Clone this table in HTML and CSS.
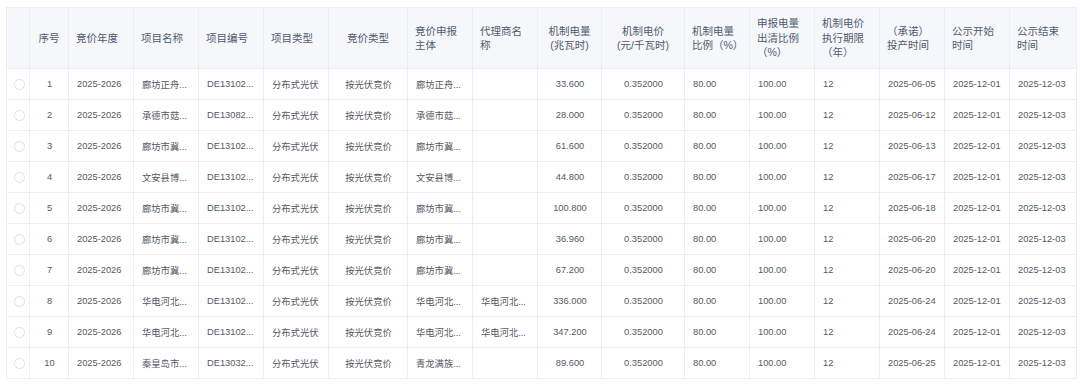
FILE: index.html
```html
<!DOCTYPE html>
<html>
    <head>
        <meta charset="utf-8">
        <link rel="stylesheet" href="styles.css">
    </head>
    <body>

    <div class="wrap">
        <table class="grid">
            <colgroup>
                <col style="width: 23px">
                <col style="width: 39px">
                <col style="width: 65px">
                <col style="width: 65px">
                <col style="width: 65px">
                <col style="width: 65px">
                <col style="width: 79px">
                <col style="width: 65px">
                <col style="width: 65px">
                <col style="width: 64px">
                <col style="width: 83px">
                <col style="width: 65px">
                <col style="width: 65px">
                <col style="width: 65px">
                <col style="width: 65px">
                <col style="width: 65px">
                <col style="width: 67px">
            </colgroup>
            <thead>
                <tr>
                    <th></th>
                    <th class="c">序号</th>
                    <th>竞价年度</th>
                    <th>项目名称</th>
                    <th>项目编号</th>
                    <th>项目类型</th>
                    <th class="c">竞价类型</th>
                    <th>竞价申报<br>主体</th>
                    <th>代理商名<br>称</th>
                    <th class="c">机制电量<br>(兆瓦时)</th>
                    <th class="c">机制电价<br>(元/千瓦时)</th>
                    <th>机制电量<br>比例（%）</th>
                    <th>申报电量<br>出清比例<br>（%）</th>
                    <th>机制电价<br>执行期限<br>（年）</th>
                    <th>（承诺）<br>投产时间</th>
                    <th>公示开始<br>时间</th>
                    <th>公示结束<br>时间</th>
                </tr>
            </thead>
            <tbody id="rows"></tbody>
        </table>
    </div>

    <script>
        const rows = [
            ['1', '廊坊正舟...', 'DE13102...', '廊坊正舟...', '', '33.600', '2025-06-05'],
            ['2', '承德市菇...', 'DE13082...', '承德市菇...', '', '28.000', '2025-06-12'],
            ['3', '廊坊市冀...', 'DE13102...', '廊坊市冀...', '', '61.600', '2025-06-13'],
            ['4', '文安县博...', 'DE13102...', '文安县博...', '', '44.800', '2025-06-17'],
            ['5', '廊坊市冀...', 'DE13102...', '廊坊市冀...', '', '100.800', '2025-06-18'],
            ['6', '廊坊市冀...', 'DE13102...', '廊坊市冀...', '', '36.960', '2025-06-20'],
            ['7', '廊坊市冀...', 'DE13102...', '廊坊市冀...', '', '67.200', '2025-06-20'],
            ['8', '华电河北...', 'DE13102...', '华电河北...', '华电河北...', '336.000', '2025-06-24'],
            ['9', '华电河北...', 'DE13102...', '华电河北...', '华电河北...', '347.200', '2025-06-24'],
            ['10', '秦皇岛市...', 'DE13032...', '青龙满族...', '', '89.600', '2025-06-25']
        ]

        const body = document.getElementById('rows')
        rows.forEach(r => {
            const tr = document.createElement('tr')
            tr.innerHTML =
                '<td><span class="radio"></span></td>'
                + '<td class="c">' + r[0] + '</td>'
                + '<td>2025-2026</td>'
                + '<td>' + r[1] + '</td>'
                + '<td>' + r[2] + '</td>'
                + '<td>分布式光伏</td>'
                + '<td class="c">按光伏竞价</td>'
                + '<td>' + r[3] + '</td>'
                + '<td>' + r[4] + '</td>'
                + '<td class="c">' + r[5] + '</td>'
                + '<td class="c">0.352000</td>'
                + '<td>80.00</td>'
                + '<td>100.00</td>'
                + '<td>12</td>'
                + '<td>' + r[6] + '</td>'
                + '<td>2025-12-01</td>'
                + '<td>2025-12-03</td>'
            body.appendChild(tr)
        })
    </script>
    </body>
</html>
```

FILE: styles.css
```css
body {
    margin: 0;
    background-color: white;
    font-family: "Liberation Sans", "Noto Sans CJK SC", sans-serif;
    font-size: 9px;
    color: #555a63;
}

.wrap {
    padding: 7px 0 0 6px;
}

.grid {
    table-layout: fixed;
    width: 1070px;
    border-collapse: collapse;
    border: 1px solid #ebeef5;
    font-size: 9.3px;
}

.grid th, .grid td {
    border: 1px solid #ebeef5;
    padding: 0 7px;
    text-align: left;
    white-space: nowrap;
    overflow: hidden;
}

.grid th {
    height: 60px;
    background-color: #f5f7fa;
    font-size: 10.5px;
    font-weight: normal;
    color: #515a6e;
    line-height: 14.5px;
    vertical-align: middle;
}

.grid td {
    height: 30px;
    padding-left: 8px;
}

.grid .c {
    text-align: center;
}

.radio {
    display: block;
    width: 9px;
    height: 9px;
    margin-left: -1px;
    border: 1px solid #dcdfe6;
    border-radius: 50%;
    background-color: white;
}
```
